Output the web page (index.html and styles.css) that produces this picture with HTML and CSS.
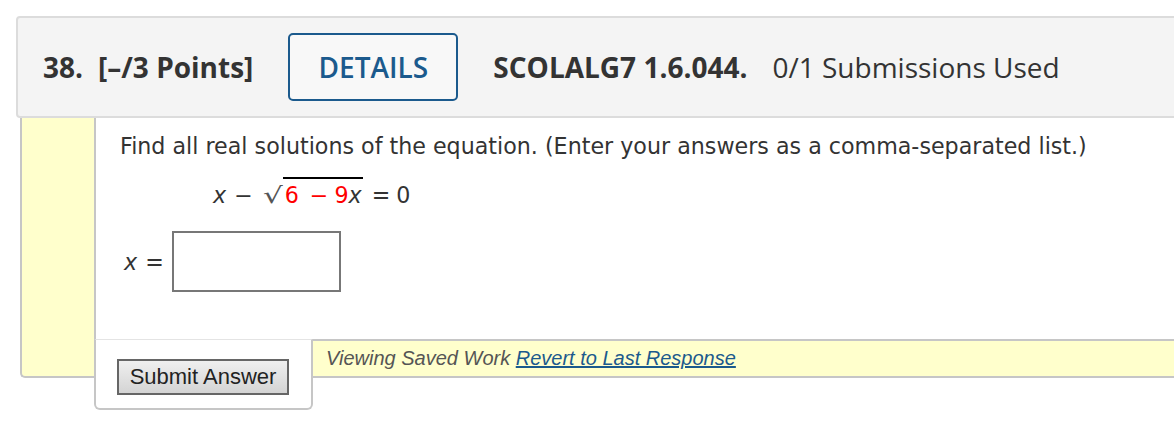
FILE: index.html
```html
<!DOCTYPE html>
<html>
<head>
<meta charset="utf-8">
<link rel="stylesheet" href="styles.css">
</head>
<body>
<div class="question">
  <div class="q-header">
    <span class="q-num">38.</span>
    <span class="q-points">[–/3 Points]</span>
    <button class="details-btn">DETAILS</button>
    <span class="q-code">SCOLALG7 1.6.044.</span>
    <span class="q-subs">0/1 Submissions Used</span>
  </div>
  <div class="q-body">
    <div class="q-side"></div>
    <div class="q-panel">
      <div class="q-content">
        <p class="prompt">Find all real solutions of the equation. (Enter your answers as a comma-separated list.)</p>
        <div class="math-line">
          <span class="mi">x</span><span class="mo m1">−</span><span class="radical">√</span><span class="radicand"><span class="red">6</span><span class="mo red m2">−</span><span class="red m3">9</span><span class="mi">x</span></span><span class="mo m4">=</span><span class="mn m5">0</span>
        </div>
        <div class="answer-row">
          <span class="mi">x</span><span class="eq">=</span>
          <input class="answer-input" type="text">
        </div>
      </div>
      <div class="q-footer">
        <div class="submit-box">
          <button class="submit-btn">Submit Answer</button>
        </div>
        <div class="saved-bar">
          <span class="saved-text">Viewing Saved Work</span> <a class="revert-link" href="#">Revert to Last Response</a>
        </div>
      </div>
    </div>
  </div>
</div>
</body>
</html>
```

FILE: styles.css
```css
html {
  overflow: hidden;
  background: #ffffff;
}

body {
  margin: 0;
  padding: 0 0 54px 0;
}

.question {
  margin: 16px 0 0 16px;
  width: 1200px;
}

.q-header {
  box-sizing: border-box;
  height: 102px;
  display: flex;
  align-items: center;
  padding-left: 25px;
  background: #f4f4f4;
  border: 2px solid #dcdcdc;
  border-radius: 4px;
  font-family: "Open Sans", sans-serif;
  font-size: 28px;
  color: #333333;
}

.q-num {
  font-weight: 700;
  margin-right: 15px;
}

.q-points {
  font-weight: 700;
}

.details-btn {
  box-sizing: border-box;
  width: 170px;
  height: 68px;
  margin-left: 35px;
  margin-right: 35px;
  background: #f8f8f8;
  border: 2px solid #1b5a8d;
  border-radius: 5px;
  color: #1b5a8d;
  font-family: "Open Sans", sans-serif;
  font-size: 28px;
  font-weight: 600;
  padding: 0;
}

.q-code {
  font-weight: 700;
  margin-right: 25px;
}

.q-subs {
  font-weight: 400;
}

.q-body {
  display: flex;
  margin-left: 4px;
  height: 260px;
}

.q-side {
  width: 72px;
  flex: none;
  background: #ffffcc;
  border-left: 2px solid #c6c6c6;
  border-bottom: 2px solid #c6c6c6;
  border-bottom-left-radius: 5px;
}

.q-panel {
  flex: 1;
  display: flex;
  flex-direction: column;
  background: #ffffff;
  border-left: 2px solid #c6c6c6;
}

.q-content {
  flex: 1;
  padding: 15px 0 0 24px;
  font-family: "DejaVu Sans", Verdana, sans-serif;
  font-size: 22.2px;
  line-height: 26px;
  color: #333333;
}

.prompt {
  margin: 0;
}

.math-line {
  margin: 23px 0 0 93px;
  white-space: nowrap;
}

.mi {
  font-style: italic;
}

.red {
  color: #ff0000;
}

.m1 { margin-left: 8px; }
.m2 { margin-left: 11px; }
.m3 { margin-left: 6px; }
.m4 { margin-left: 9px; }
.m5 { margin-left: 6px; }

.radical {
  display: inline-block;
  width: 20px;
  margin-left: 10px;
  color: #555555;
  transform: scaleX(1.4);
  transform-origin: left center;
}

.radicand {
  border-top: 2px solid #000000;
  padding: 3px 1px 0 2px;
}

.answer-row {
  display: flex;
  align-items: center;
  margin-top: 23px;
  padding-left: 4px;
}

.eq {
  margin-left: 8px;
  margin-right: 8px;
}

.answer-input {
  box-sizing: border-box;
  width: 169px;
  height: 61px;
  border: 2px solid #777777;
  border-radius: 0;
  margin: 0;
  padding: 0 6px;
  background: #ffffff;
}

.q-footer {
  display: flex;
  align-items: flex-start;
  height: 39px;
  margin-left: -2px;
}

.submit-box {
  box-sizing: border-box;
  width: 219px;
  height: 71px;
  flex: none;
  background: #ffffff;
  border-top: 1px solid #e4e4e4;
  border-left: 2px solid #c6c6c6;
  border-right: 2px solid #c6c6c6;
  border-bottom: 2px solid #c6c6c6;
  border-radius: 0 0 6px 6px;
  padding: 19px 0 0 21px;
}

.submit-btn {
  box-sizing: border-box;
  width: 172px;
  height: 36px;
  margin: 0;
  padding: 0;
  border: 2px solid #666666;
  border-radius: 0;
  background: linear-gradient(#efefef, #d4d4d4);
  font-family: "Liberation Sans", Arial, sans-serif;
  font-size: 22px;
  color: #222222;
}

.saved-bar {
  box-sizing: border-box;
  flex: 1;
  height: 39px;
  background: #ffffcc;
  border-top: 2px solid #c6c6c6;
  border-bottom: 2px solid #c6c6c6;
  padding: 4px 0 0 13px;
  font-family: "Liberation Sans", Arial, sans-serif;
  font-size: 20px;
  font-style: italic;
  line-height: 26px;
  white-space: nowrap;
}

.saved-text {
  color: #555555;
}

.revert-link {
  color: #1b5a8d;
  text-decoration: underline;
}
```
